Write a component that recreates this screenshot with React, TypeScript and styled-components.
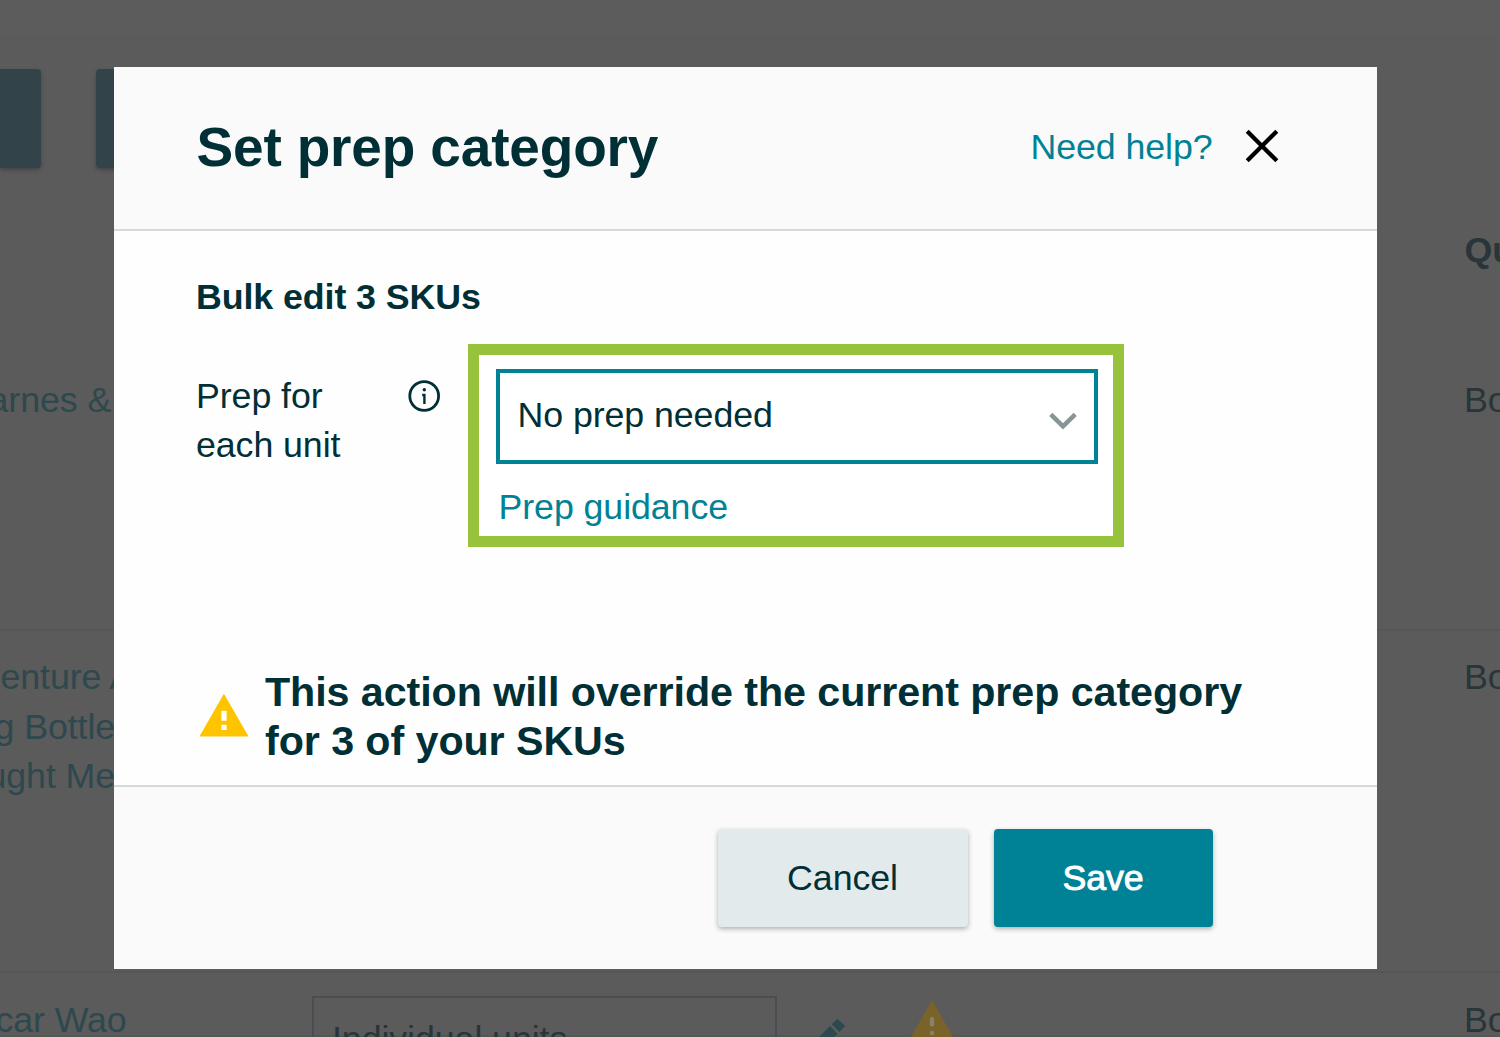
import { createGlobalStyle, styled } from 'styled-components';

interface ProductLine {
  text: string;
  shift: number;
}

interface ProductRow {
  lines: ProductLine[];
  quantity: string;
  height: number;
  offsetTop: number;
}

const productRows: ProductRow[] = [
  { lines: [{ text: 'arnes &', shift: -11.5 }], quantity: 'Boxes', height: 324, offsetTop: 69 },
  {
    lines: [
      { text: 'enture A', shift: 0.5 },
      { text: 'g Bottle', shift: -5.5 },
      { text: 'ught Me', shift: -13.5 },
    ],
    quantity: 'Boxes',
    height: 342,
    offsetTop: 22,
  },
];

const WarningIcon = () => (
  <StWarningSvg width="50" height="44" viewBox="0 0 50 44">
    <path d="M24.9 0.7 L49.6 43.5 H0.4 Z" fill="#ffc400" />
    <rect x="22.4" y="17.8" width="5.2" height="10" fill="#fff" />
    <rect x="22.4" y="31.8" width="5.2" height="5.2" fill="#fff" />
  </StWarningSvg>
);

const CloseIcon = () => (
  <svg width="34" height="34" viewBox="0 0 34 34">
    <path d="M2.2 2.2 L31.8 31.8 M31.8 2.2 L2.2 31.8" stroke="#000" strokeWidth="4.2" fill="none" />
  </svg>
);

const InfoIcon = () => (
  <StInfoSvg width="34" height="34" viewBox="0 0 34 34">
    <circle cx="17.2" cy="17" r="14.4" stroke="#002f36" strokeWidth="2.8" fill="none" />
    <circle cx="17.3" cy="10.7" r="1.7" fill="#002f36" />
    <path d="M15.2 16 H17.4 V25" stroke="#002f36" strokeWidth="2.4" fill="none" />
  </StInfoSvg>
);

const ChevronIcon = () => (
  <svg width="30" height="20" viewBox="0 0 30 20">
    <path d="M2.8 3.4 L15 15.3 L27.2 3.4" stroke="#879596" strokeWidth="4.6" fill="none" />
  </svg>
);

const PencilIcon = () => (
  <StPencilSvg width="30" height="30" viewBox="0 0 30 30">
    <path d="M20.3 0.7 L28.3 8 L22.4 14 L14.8 6.2 Z" fill="#2d494f" />
    <path d="M13 8 L20.6 15.8 L8.4 28 L0.6 28 L0.6 20.4 Z" fill="#2d494f" />
  </StPencilSvg>
);

const DimWarningIcon = () => (
  <StDimWarningSvg width="50" height="44" viewBox="0 0 50 44">
    <path d="M25 0 L50 44 H0 Z" fill="#7a632b" />
    <rect x="22.8" y="17" width="4.4" height="9.4" rx="2" fill="#8b8169" />
    <circle cx="25" cy="33" r="2.2" fill="#8b8169" />
  </StDimWarningSvg>
);

const App = () => {
  return (
    <StPage>
      <GlobalStyle />
      <StBackground>
        <StTopBand />
        <StToolbar>
          <StToolbarButton width={41} />
          <StToolbarButton width={240} />
        </StToolbar>
        <StTableHeader>Quantity</StTableHeader>
        {productRows.map((row) => (
          <StTableRow key={row.lines[0].text} height={row.height} $offsetTop={row.offsetTop}>
            <div>
              {row.lines.map((line) => (
                <StProductLine key={line.text} $shift={line.shift}>
                  {line.text}
                </StProductLine>
              ))}
            </div>
            <StQuantity>{row.quantity}</StQuantity>
          </StTableRow>
        ))}
        <StTableRow height={64} $offsetTop={23}>
          <StProductLine $shift={-4.6}>car Wao</StProductLine>
          <StPackingCell>
            <StPackingSelect>Individual units</StPackingSelect>
            <PencilIcon />
            <DimWarningIcon />
          </StPackingCell>
          <StQuantity>Boxes</StQuantity>
        </StTableRow>
      </StBackground>

      <StModal>
        <StModalHeader>
          <StTitle>Set prep category</StTitle>
          <StHelpLink>Need help?</StHelpLink>
          <StCloseButton aria-label="close">
            <CloseIcon />
          </StCloseButton>
        </StModalHeader>
        <StModalBody>
          <StSubTitle>Bulk edit 3 SKUs</StSubTitle>
          <StFieldRow>
            <StLabel>
              Prep for
              <br />
              each unit
            </StLabel>
            <InfoIcon />
            <StHighlight>
              <StSelect>
                No prep needed
                <ChevronIcon />
              </StSelect>
              <StGuidanceLink>Prep guidance</StGuidanceLink>
            </StHighlight>
          </StFieldRow>
          <StNotice>
            <WarningIcon />
            <StNoticeText>
              This action will override the current prep category
              <br />
              for 3 of your SKUs
            </StNoticeText>
          </StNotice>
        </StModalBody>
        <StModalFooter>
          <StButton width={250}>Cancel</StButton>
          <StButton width={219} $primary>
            Save
          </StButton>
        </StModalFooter>
      </StModal>
    </StPage>
  );
};

const GlobalStyle = createGlobalStyle`
  * {
    box-sizing: border-box;
  }

  body {
    margin: 0;
    overflow: hidden;
    background-color: #5b5b5b;
  }

  svg {
    display: block;
    flex-shrink: 0;
  }
`;

const StPage = styled.div`
  width: 1500px;
  height: 1037px;
  position: relative;
  overflow: hidden;

  font-family: 'Liberation Sans', Arial, sans-serif;
  font-size: 35.75px;
  line-height: 49.5px;
  letter-spacing: -0.08px;
  color: #002f36;
`;

const StBackground = styled.div`
  height: 100%;
  display: flex;
  flex-direction: column;
  overflow: hidden;
  background-color: #5b5b5b;
  color: #283539;
`;

const StTopBand = styled.div`
  flex: none;
  height: 38px;
  background-color: #5c5c5c;
  border-bottom: 1px solid #595959;
`;

const StToolbar = styled.div`
  flex: none;
  display: flex;
  gap: 55px;
  height: 187px;
  padding-top: 31px;
`;

const StToolbarButton = styled.div<{ width: number }>`
  width: ${({ width }) => width}px;
  height: 99px;
  border-radius: ${({ width }) => (width < 100 ? '0 4px 4px 0' : '4px')};
  background-color: #32434a;
  box-shadow: 0 2px 4px rgba(0, 0, 0, 0.25);
`;

const StTableHeader = styled.div`
  flex: none;
  height: 82px;
  padding: 1px 0 0 1464.5px;
  font-weight: bold;
  white-space: nowrap;
`;

const StTableRow = styled.div<{ height: number; $offsetTop: number }>`
  flex: none;
  display: flex;
  justify-content: space-between;
  height: ${({ height }) => height}px;
  padding-top: ${({ $offsetTop }) => $offsetTop}px;
  border-bottom: 2px solid #555656;
`;

const StProductLine = styled.div<{ $shift: number }>`
  width: 312px;
  text-indent: ${({ $shift }) => $shift}px;
  white-space: nowrap;
  color: #2d484e;
`;

const StQuantity = styled.div`
  width: 36px;
  overflow: visible;
  white-space: nowrap;
`;

const StPackingCell = styled.div`
  flex: 1;
  display: flex;
  align-items: flex-start;
`;

const StPackingSelect = styled.div`
  width: 465px;
  height: 96px;
  padding: 17px 18px 0;
  border: 2px solid #4a4e4e;
  white-space: nowrap;
`;

const StPencilSvg = styled.svg`
  margin: 22px 0 0 40px;
`;

const StDimWarningSvg = styled.svg`
  margin: 4px 0 0 60px;
`;

const StModal = styled.div`
  position: absolute;
  top: 67px;
  left: 114px;
  width: 1263px;
  height: 902px;
  display: flex;
  flex-direction: column;
  background-color: #fefefe;
`;

const StModalHeader = styled.div`
  flex: none;
  display: flex;
  align-items: center;
  height: 164px;
  padding: 0 98px 4px 82.5px;
  border-bottom: 2px solid #d5dbdb;
  background-color: #fafafa;
`;

const StTitle = styled.h1`
  margin: 0;
  padding-top: 2px;
  flex: 1;
  font-size: 55px;
  line-height: 66px;
  font-weight: bold;
  letter-spacing: -0.17px;
`;

const StHelpLink = styled.a`
  padding-top: 3px;
  color: #008296;
`;

const StCloseButton = styled.button`
  margin: 0 0 0 32.5px;
  padding: 0;
  border: none;
  background: none;
  cursor: pointer;
`;

const StModalBody = styled.div`
  flex: 1;
  padding: 42px 82px 0;
`;

const StSubTitle = styled.h2`
  margin: 0;
  font-size: inherit;
  font-weight: bold;
`;

const StFieldRow = styled.div`
  display: flex;
  align-items: flex-start;
  margin-top: 21.5px;
`;

const StLabel = styled.div`
  width: 211px;
  padding-top: 27.5px;
`;

const StInfoSvg = styled.svg`
  margin-top: 34.5px;
`;

const StHighlight = styled.div`
  width: 656px;
  height: 203px;
  margin-left: 27px;
  padding: 14px 15px 0 17px;
  border: 11px solid #97c23c;
  background-color: #fff;
`;

const StSelect = styled.div`
  display: flex;
  align-items: center;
  justify-content: space-between;
  height: 95px;
  padding: 0 16px 1px 17.5px;
  border: 4px solid #008296;

  svg {
    margin-top: 10px;
  }
`;

const StGuidanceLink = styled.a`
  display: block;
  margin: 19px 0 0 2.5px;
  color: #008296;
`;

const StNotice = styled.div`
  display: flex;
  align-items: flex-start;
  margin-top: 120.5px;
`;

const StWarningSvg = styled.svg`
  margin: 25px 0 0 2.5px;
`;

const StNoticeText = styled.div`
  margin-left: 16.5px;
  font-size: 41.25px;
  font-weight: bold;
  white-space: nowrap;
`;

const StModalFooter = styled.div`
  flex: none;
  display: flex;
  justify-content: flex-end;
  gap: 26px;
  height: 184px;
  padding: 42px 164.5px 0 0;
  border-top: 2px solid #d5dbdb;
  background-color: #fafafa;
`;

const StButton = styled.button<{ width: number; $primary?: boolean }>`
  width: ${({ width }) => width}px;
  height: 98px;
  padding: 1px 0 0;
  border: none;
  border-radius: 4px;
  font: inherit;
  letter-spacing: inherit;
  color: ${({ $primary }) => ($primary ? '#fff' : '#002f36')};
  background-color: ${({ $primary }) => ($primary ? '#008296' : '#e3eaec')};
  box-shadow: 0 2px 5px rgba(0, 0, 0, 0.3);
  -webkit-text-stroke: ${({ $primary }) => ($primary ? '0.9px #fff' : '0')};
  cursor: pointer;
`;

export default App;
